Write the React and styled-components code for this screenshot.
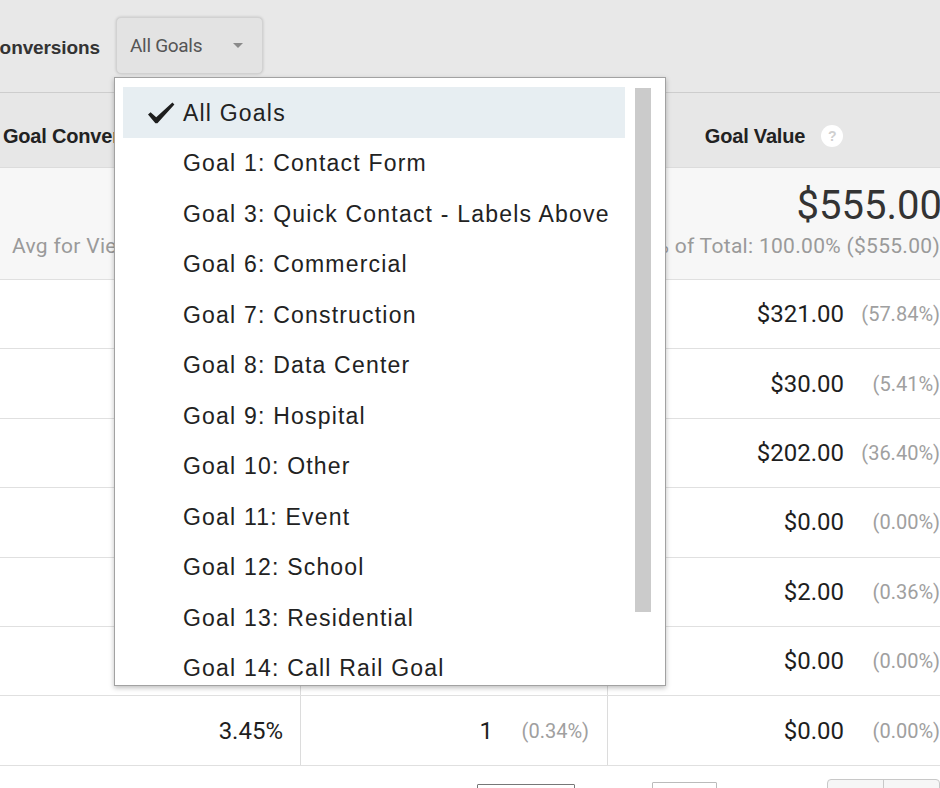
import React from 'react'
import styled, { createGlobalStyle } from 'styled-components'

const GlobalStyle = createGlobalStyle`
  html, body {
    margin: 0;
    padding: 0;
    background: #fff;
    overflow: hidden;
  }
  body {
    width: 940px;
    height: 788px;
    font-family: Roboto, "Liberation Sans", Arial, sans-serif;
    color: #222;
  }
`

const COLS = '301px 307px 350px'

const goals = [
  'All Goals',
  'Goal 1: Contact Form',
  'Goal 3: Quick Contact - Labels Above',
  'Goal 6: Commercial',
  'Goal 7: Construction',
  'Goal 8: Data Center',
  'Goal 9: Hospital',
  'Goal 10: Other',
  'Goal 11: Event',
  'Goal 12: School',
  'Goal 13: Residential',
  'Goal 14: Call Rail Goal',
  'Goal 15: Phone Call',
]

const rows = [
  { rate: '3.45%', done: '168', donePct: '(57.73%)', value: '$321.00', valuePct: '(57.84%)' },
  { rate: '3.45%', done: '15', donePct: '(5.15%)', value: '$30.00', valuePct: '(5.41%)' },
  { rate: '3.45%', done: '101', donePct: '(34.71%)', value: '$202.00', valuePct: '(36.40%)' },
  { rate: '3.45%', done: '3', donePct: '(1.03%)', value: '$0.00', valuePct: '(0.00%)' },
  { rate: '3.45%', done: '1', donePct: '(0.34%)', value: '$2.00', valuePct: '(0.36%)' },
  { rate: '3.45%', done: '2', donePct: '(0.69%)', value: '$0.00', valuePct: '(0.00%)' },
  { rate: '3.45%', done: '1', donePct: '(0.34%)', value: '$0.00', valuePct: '(0.00%)' },
]

const Page = styled.div`
  position: relative;
  width: 958px;
`

const TopBar = styled.div`
  box-sizing: border-box;
  height: 93px;
  background: #e8e8e8;
  border-bottom: 1px solid #cdcdcd;
  display: flex;
  align-items: center;
  gap: 16px;
`

const BarLabel = styled.span`
  margin-left: -14px;
  padding-top: 3px;
  font-family: "Liberation Sans", Arial, sans-serif;
  font-weight: bold;
  font-size: 19px;
  color: #333;
  letter-spacing: -0.1px;
`

const SelectButton = styled.div`
  box-sizing: border-box;
  width: 147px;
  height: 57px;
  margin-top: -1px;
  padding: 0 13px;
  display: flex;
  align-items: center;
  justify-content: space-between;
  background: #e3e3e3;
  border: 1px solid #d2d2d2;
  border-radius: 5px;
  box-shadow: 0 0 3px rgba(0, 0, 0, 0.18);
  font-size: 19px;
  color: #555;
  letter-spacing: -0.3px;
`

const Caret = styled.span`
  width: 0;
  height: 0;
  margin-right: 6px;
  border-left: 5px solid transparent;
  border-right: 5px solid transparent;
  border-top: 5px solid #8a8a8a;
`

const Row = styled.div`
  box-sizing: border-box;
  display: grid;
  grid-template-columns: ${COLS};
  height: ${({ h }) => h}px;
  background: ${({ bg }) => bg || '#fff'};
  border-bottom: 1px solid ${({ line }) => line || '#e0e0e0'};
`

const HeadCell = styled.div`
  display: flex;
  align-items: center;
  justify-content: ${({ left }) => (left ? 'flex-start' : 'center')};
  gap: 16px;
  padding: ${({ left }) => (left ? '12px 0 0 3px' : '12px 18px 0 0')};
  overflow: hidden;
  white-space: nowrap;
  font-family: "Liberation Sans", Arial, sans-serif;
  font-weight: bold;
  font-size: 20px;
  color: #222;
  letter-spacing: -0.2px;
  border-right: ${({ last }) => (last ? 'none' : '1px solid #d6d6d6')};
`

const Help = styled.span`
  width: 22px;
  height: 22px;
  border-radius: 50%;
  background: #fff;
  color: #d0d0d0;
  font-size: 14px;
  font-weight: bold;
  display: flex;
  align-items: center;
  justify-content: center;
`

const SummaryCell = styled.div`
  display: flex;
  flex-direction: column;
  align-items: ${({ left }) => (left ? 'flex-start' : 'flex-end')};
  justify-content: center;
  gap: 9px;
  padding: ${({ left }) => (left ? '0 0 4px 12px' : '0 16px 4px 0')};
  overflow: hidden;
  white-space: nowrap;
  border-right: ${({ last }) => (last ? 'none' : '1px solid #e0e0e0')};
`

const BigValue = styled.span`
  font-size: 40px;
  line-height: 40px;
  color: #333;
`

const SubText = styled.span`
  font-size: 21px;
  line-height: 22px;
  letter-spacing: 0.3px;
  color: #9a9a9a;
  margin-right: 2px;
`

const Cell = styled.div`
  display: flex;
  align-items: center;
  justify-content: flex-end;
  padding-right: ${({ pr }) => pr}px;
  border-right: ${({ last }) => (last ? 'none' : '1px solid #dcdcdc')};
  white-space: nowrap;
`

const Value = styled.span`
  font-size: 24px;
  color: #1e1e1e;
`

const Pct = styled.span`
  width: 84px;
  margin-left: 12px;
  text-align: right;
  font-size: 20px;
  color: #a0a0a0;
`

const Footer = styled.div`
  display: flex;
  align-items: flex-start;
  padding: 14px 0 0 477px;
  height: 60px;
`

const FooterBox = styled.div`
  box-sizing: border-box;
  width: ${({ w }) => w}px;
  height: 36px;
  margin-top: ${({ mt }) => mt}px;
  border: 1px solid ${({ line }) => line};
  border-radius: 1px;
  background: #fff;
  display: flex;
  font-size: 20px;
  color: #333;
  align-items: center;
  padding-left: 8px;
`

const FooterLabel = styled.span`
  width: ${({ w }) => w}px;
  padding-top: 22px;
  text-align: center;
  font-size: 20px;
  color: #333;
`

const Pager = styled.div`
  box-sizing: border-box;
  display: flex;
  margin-top: -1px;
  height: 36px;
  border: 1px solid #c8c8c8;
  border-radius: 4px;
  background: #f6f6f6;
  overflow: hidden;
`

const PagerButton = styled.span`
  width: 55px;
  border-left: ${({ first }) => (first ? 'none' : '1px solid #c8c8c8')};
`

const Dropdown = styled.div`
  position: absolute;
  left: 114px;
  top: 77px;
  box-sizing: border-box;
  width: 552px;
  height: 609px;
  padding: 9px 13px 0 8px;
  display: flex;
  gap: 10px;
  overflow: hidden;
  background: #fff;
  border: 1px solid #a2a2a2;
  box-shadow: 0 2px 5px rgba(0, 0, 0, 0.25);
`

const GoalList = styled.div`
  width: 502px;
  display: flex;
  flex-direction: column;
  flex-shrink: 0;
`

const GoalItem = styled.div`
  flex-shrink: 0;
  box-sizing: border-box;
  height: 50.5px;
  display: flex;
  align-items: center;
  padding: 2px 0 0 24px;
  background: ${({ selected }) => (selected ? '#e7eef2' : 'transparent')};
  font-family: "Liberation Sans", Arial, sans-serif;
  font-size: 23px;
  letter-spacing: 1.2px;
  color: #222;
  white-space: nowrap;
`

const CheckSlot = styled.span`
  width: 36px;
  display: flex;
  align-items: center;
`

const ScrollThumb = styled.div`
  width: 16px;
  height: 524px;
  margin-top: 1px;
  flex-shrink: 0;
  background: #cbcbcb;
`

const Check = () => (
  <svg width="28" height="22" viewBox="0 0 28 22">
    <path d="M1 12.6 L3.6 10.2 L9.2 15.2 L25.4 0.6 L27.4 2.6 L10.4 21.2 L8.4 21.2 Z" fill="#1e1e1e" />
  </svg>
)

export default function App() {
  return (
    <>
      <GlobalStyle />
      <Page>
        <TopBar>
          <BarLabel>Conversions</BarLabel>
          <SelectButton>
            All Goals
            <Caret />
          </SelectButton>
        </TopBar>

        <Row h={75} bg="#e7e7e7" line="#dcdcdc">
          <HeadCell left>Goal Conversion Rate</HeadCell>
          <HeadCell>
            Goal Completions
            <Help>?</Help>
          </HeadCell>
          <HeadCell last>
            Goal Value
            <Help>?</Help>
          </HeadCell>
        </Row>

        <Row h={112} bg="#f7f7f7" line="#e0e0e0">
          <SummaryCell left>
            <BigValue>&nbsp;</BigValue>
            <SubText>Avg for View: 3.45% (0.00%)</SubText>
          </SummaryCell>
          <SummaryCell>
            <BigValue>291</BigValue>
            <SubText>% of Total: 100.00% (291)</SubText>
          </SummaryCell>
          <SummaryCell last>
            <BigValue>$555.00</BigValue>
            <SubText>% of Total: 100.00% ($555.00)</SubText>
          </SummaryCell>
        </Row>

        {rows.map((r, i) => (
          <Row key={i} h={69.4}>
            <Cell pr={17}>
              <Value>{r.rate}</Value>
            </Cell>
            <Cell pr={18}>
              <Value>{r.done}</Value>
              <Pct>{r.donePct}</Pct>
            </Cell>
            <Cell pr={18} last>
              <Value>{r.value}</Value>
              <Pct>{r.valuePct}</Pct>
            </Cell>
          </Row>
        ))}

        <Footer>
          <FooterBox w={98} mt={4} line="#777">10</FooterBox>
          <FooterLabel w={77}>Go to:</FooterLabel>
          <FooterBox w={65} mt={2} line="#bbb">1</FooterBox>
          <FooterLabel w={110}>1 - 7 of 7</FooterLabel>
          <Pager>
            <PagerButton first />
            <PagerButton />
          </Pager>
        </Footer>

        <Dropdown>
          <GoalList>
            {goals.map((g, i) => (
              <GoalItem key={g} selected={i === 0}>
                <CheckSlot>{i === 0 && <Check />}</CheckSlot>
                {g}
              </GoalItem>
            ))}
          </GoalList>
          <ScrollThumb />
        </Dropdown>
      </Page>
    </>
  )
}
